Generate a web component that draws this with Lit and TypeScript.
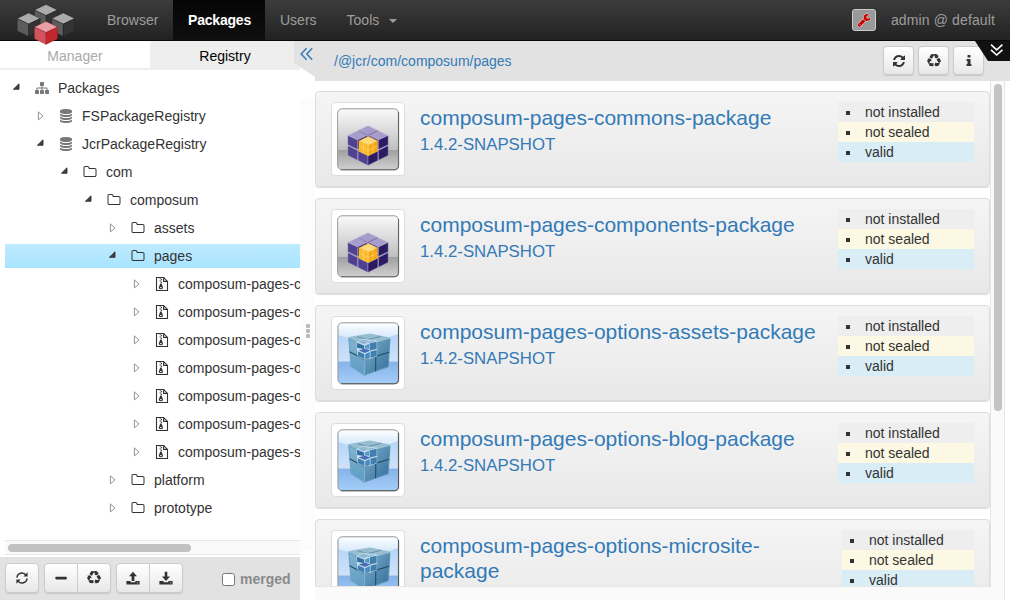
import { LitElement, html, css, svg } from "lit";
import { customElement } from "lit/decorators.js";
import { classMap } from "lit/directives/class-map.js";

const P = {
  refresh: "M1639 1056q0 5-1 7-64 268-268 434.5t-478 166.5q-146 0-282.5-55t-243.5-157l-129 129q-19 19-45 19t-45-19-19-45v-448q0-26 19-45t45-19h448q26 0 45 19t19 45-19 45l-137 137q71 66 161 102t187 36q134 0 250-65t186-179q11-17 53-117 8-23 30-23h192q13 0 22.5 9.5t9.5 22.5zm25-800v448q0 26-19 45t-45 19h-448q-26 0-45-19t-19-45 19-45l138-138q-148-137-349-137-134 0-250 65t-186 179q-11 17-53 117-8 23-30 23h-199q-13 0-22.5-9.5t-9.5-22.5v-7q65-268 270-434.5t480-166.5q146 0 284 55.5t245 156.5l130-129q19-19 45-19t45 19 19 45z",
  recycle: "M836 1169l-15 368-2 22-420-29q-36-3-67-31.5t-47-65.5q-11-27-14.5-55t4-65 12-55 21.5-64 19-53q78 12 509 28zm-387-586l180 379-147-92q-63 72-111.5 144.5t-72.5 125-39.5 94.5-18.5 63l-4 21-190-357q-17-26-18-56t6-47l8-18q35-63 114-188l-140-86zm1231 517l-188 359q-12 29-36.5 46.5t-43.5 20.5l-18 4q-71 7-219 12l8 164-230-367 211-362 7 173q170 16 283 5t170-33zm-785-924q-47 63-265 435l-317-187-19-12 225-356q20-31 60-45t80-10q24 2 48.5 12t42 21 41.5 33 36 34.5 36 39.5 32 35zm655 307l212 363q18 37 12.5 76t-27.5 74q-13 20-33 37t-38 28-48.5 22-47 16-51.5 14-46 12q-34-72-265-436l313-195zm-143-226l142-83-220 373-419-20 151-86q-34-89-75-166t-75.5-123.5-64.5-80-47-46.5l-17-13 405 1q31-3 58 10.5t39 28.5l11 15q39 61 112 190z",
  info: "M1216 1344v128q0 26-19 45t-45 19h-512q-26 0-45-19t-19-45v-128q0-26 19-45t45-19h64v-384h-64q-26 0-45-19t-19-45v-128q0-26 19-45t45-19h384q26 0 45 19t19 45v576h64q26 0 45 19t19 45zm-128-1152v192q0 26-19 45t-45 19h-256q-26 0-45-19t-19-45v-192q0-26 19-45t45-19h256q26 0 45 19t19 45z",
  sitemap: "M1792 1248v320q0 40-28 68t-68 28h-320q-40 0-68-28t-28-68v-320q0-40 28-68t68-28h96v-192h-512v192h96q40 0 68 28t28 68v320q0 40-28 68t-68 28h-320q-40 0-68-28t-28-68v-320q0-40 28-68t68-28h96v-192h-512v192h96q40 0 68 28t28 68v320q0 40-28 68t-68 28h-320q-40 0-68-28t-28-68v-320q0-40 28-68t68-28h96v-192q0-52 38-90t90-38h512v-192h-96q-40 0-68-28t-28-68v-320q0-40 28-68t68-28h320q40 0 68 28t28 68v320q0 40-28 68t-68 28h-96v192h512q52 0 90 38t38 90v192h96q40 0 68 28t28 68z",
  database: "M896 768q237 0 443-43t325-127v170q0 69-103 128t-280 93.5-385 34.5-385-34.5-280-93.5-103-128v-170q119 84 325 127t443 43zm0 768q237 0 443-43t325-127v170q0 69-103 128t-280 93.5-385 34.5-385-34.5-280-93.5-103-128v-170q119 84 325 127t443 43zm0-384q237 0 443-43t325-127v170q0 69-103 128t-280 93.5-385 34.5-385-34.5-280-93.5-103-128v-170q119 84 325 127t443 43zm0-1152q208 0 385 34.5t280 93.5 103 128v128q0 69-103 128t-280 93.5-385 34.5-385-34.5-280-93.5-103-128v-128q0-69 103-128t280-93.5 385-34.5z",
  folder: "M1600 1312v-704q0-40-28-68t-68-28h-704q-40 0-68-28t-28-68v-64q0-40-28-68t-68-28h-320q-40 0-68 28t-28 68v960q0 40 28 68t68 28h1216q40 0 68-28t28-68zm128-704v704q0 92-66 158t-158 66h-1216q-92 0-158-66t-66-158v-960q0-92 66-158t158-66h320q92 0 158 66t66 158v32h672q92 0 158 66t66 158z",
  wrench: "M448 1472q0-26-19-45t-45-19-45 19-19 45 19 45 45 19 45-19 19-45zm644-420l-682 682q-37 37-90 37-52 0-91-37l-106-108q-38-36-38-90 0-53 38-91l681-681q39 98 114.5 173.5t173.5 114.5zm634-435q0 39-23 106-47 134-164.5 217.5t-258.5 83.5q-185 0-316.5-131.5t-131.5-316.5 131.5-316.5 316.5-131.5q58 0 121.5 16.5t107.5 46.5q16 11 16 28t-16 28l-293 169v224l193 107q5-3 79-48.5t135.5-81 70.5-35.5q15 0 23.5 10t8.5 25z",
};

const fa = (name: keyof typeof P, size = 14) =>
  html`<svg width=${size} height=${size} viewBox="0 0 1792 1792" fill="currentColor"><path d=${P[name]}></path></svg>`;

const zipIcon = html`<svg width="14" height="16" viewBox="0 0 14 16" fill="none" stroke="currentColor" stroke-width="1.1">
  <path d="M1.5 1.5H8.6L12.5 5.4V14.5H1.5Z"></path><path d="M8.6 1.6V5.4H12.4"></path>
  <path d="M4.6 2.2h1.2M5.8 3.6h1.2M4.6 5h1.2M5.8 6.4h1.2" stroke-width="1.2"></path>
  <path d="M5.2 7.4h1.4L8 11.4a2.1 1.9 0 0 1-4.2 0Z" fill="currentColor" stroke="none"></path>
  <path d="M5 11.6h1.8" stroke="#fff" stroke-width=".9"></path></svg>`;

const syncThin = html`<svg width="14" height="14" viewBox="0 0 14 14" fill="none" stroke="currentColor" stroke-width="1.4">
  <path d="M1.9 6.6A5 5 0 0 1 11 4.2"></path><path d="M12.1 7.4A5 5 0 0 1 3 9.8"></path>
  <path d="M12.6 1.2V5.4H8.4ZM1.4 12.8V8.6H5.6Z" fill="currentColor" stroke="none"></path></svg>`;

const minusIcon = html`<svg width="14" height="14" viewBox="0 0 14 14" fill="currentColor"><rect x="1.4" y="5.8" width="11.4" height="2.8" rx=".8"></rect></svg>`;

const tray = svg`<path fill-rule="evenodd" d="M.4 10H4.6V11.2H9.4V10H13.6V13.4H.4ZM10.9 11.4v.9h1.2v-.9Z"></path>`;
const uploadIcon = html`<svg width="14" height="14" viewBox="0 0 14 14" fill="currentColor">${tray}<path d="M7 .8L11 5.3H8.4V10H5.6V5.3H3Z"></path></svg>`;
const downloadIcon = html`<svg width="14" height="14" viewBox="0 0 14 14" fill="currentColor">${tray}<path d="M7 10L3 5.6H5.7V.8H8.3V5.6H11Z"></path></svg>`;

/* Isometric cube: x/y is the top vertex, w the half width, q the quarter height, h the side height. */
const cube = (x: number, y: number, w: number, q: number, h: number, c: string[], edge = "none", sw = 0) => svg`
  <g stroke=${edge} stroke-width=${sw} stroke-linejoin="round">
    <path fill=${c[0]} d="M${x} ${y}l${w} ${q}l${-w} ${q}l${-w} ${-q}z"></path>
    <path fill=${c[1]} d="M${x - w} ${y + q}l${w} ${q}v${h}l${-w} ${-q}z"></path>
    <path fill=${c[2]} d="M${x + w} ${y + q}l${-w} ${q}v${h}l${w} ${-q}z"></path>
  </g>`;

const GREY = ["#ababab", "#5c5c5c", "#333"];
const logo = html`<svg width="60" height="44" viewBox="0 0 60 44">
  ${cube(30, 2.4, 11.5, 5.6, 12.4, GREY, "#1b1b1b", 0.4)}
  ${cube(12.7, 10.9, 11.5, 5.6, 12.4, GREY, "#1b1b1b", 0.4)}
  ${cube(47.3, 10.9, 11.5, 5.6, 12.4, GREY, "#1b1b1b", 0.4)}
  ${cube(30, 19.4, 11.5, 5.6, 11.8, ["#e8a0a6", "#cf545d", "#c1272d"], "#8a2026", 0.3)}
</svg>`;

const VIOLET = ["#a79dcb", "#4f4190", "#2c1b62"];
const GOLD = ["#ffd873", "#fdb827", "#f7a70f"];
const violetIcon = html`<svg class="pic" width="64" height="64" viewBox="0 0 64 64">
  <defs><linearGradient id="g" x1="0" y1="0" x2="0" y2="1">
    <stop offset="0" stop-color="#fafafa"></stop><stop offset=".67" stop-color="#bfbfbf"></stop>
    <stop offset=".68" stop-color="#a0a0a0"></stop><stop offset="1" stop-color="#d0d0d0"></stop></linearGradient></defs>
  <rect x="1.6" y="1.8" width="61" height="61" rx="4.5" fill="url(#g)" stroke="#999" stroke-width="1"></rect>
  <path d="M62.5 5V58.7a4 4 0 0 1-4 4H5" fill="none" stroke="#666" stroke-width="1.1"></path>
  ${cube(21.6, 33.8, 9.8, 4.8, 9.8, VIOLET, "#c4bddc", 0.4)}
  ${cube(42.4, 33.8, 9.8, 4.8, 9.8, VIOLET, "#c4bddc", 0.4)}
  ${cube(32, 39, 9.8, 4.8, 9.8, VIOLET, "#c4bddc", 0.4)}
  ${cube(32, 18.8, 9.6, 4.5, 9.6, VIOLET, "#c4bddc", 0.4)}
  ${cube(21.6, 23.8, 9.8, 4.6, 9.4, VIOLET, "#c4bddc", 0.4)}
  ${cube(42.4, 23.8, 9.8, 4.6, 9.4, VIOLET, "#c4bddc", 0.4)}
  ${cube(32.2, 29.4, 9.3, 4.6, 10.2, GOLD, "#ffc84a", 0.4)}
  <path d="M27.5 31.7l9.4 4.6M36.9 31.7l-9.4 4.6v10M36.9 36.3v10M22.9 39l9.3 4.6l9.3-4.6M32.2 38.6v10" fill="none" stroke="#ffe49a" stroke-width=".6" opacity=".8"></path>
</svg>`;

const blueIcon = html`<svg class="pic" width="64" height="64" viewBox="0 0 64 64">
  <defs>
    <linearGradient id="b" x1="0" y1="0" x2="0" y2="1"><stop offset="0" stop-color="#a9cff8"></stop><stop offset=".63" stop-color="#cfe2f8"></stop><stop offset=".64" stop-color="#86b3ea"></stop><stop offset="1" stop-color="#a4cdf8"></stop></linearGradient>
    <linearGradient id="s" x1="0" y1="0" x2="0" y2="1"><stop offset="0" stop-color="#fff"></stop><stop offset="1" stop-color="#dfeefd" stop-opacity=".7"></stop></linearGradient>
    <linearGradient id="l" x1="0" y1="0" x2="0" y2="1"><stop offset="0" stop-color="#86b3cf"></stop><stop offset="1" stop-color="#5b9bc4"></stop></linearGradient>
    <linearGradient id="r" x1="0" y1="0" x2="1" y2="1"><stop offset="0" stop-color="#7fb0cd"></stop><stop offset="1" stop-color="#2f6b98"></stop></linearGradient>
  </defs>
  <rect x="1.9" y="1.8" width="60.7" height="61" rx="4.5" fill="url(#b)"></rect>
  <path d="M2.4 6a4 4 0 0 1 4-4H58a4 4 0 0 1 4 4V13Q32 25 2.4 14Z" fill="url(#s)"></path>
  <rect x="1.9" y="1.8" width="60.7" height="61" rx="4.5" fill="none" stroke="#999" stroke-width="1"></rect>
  <path d="M62.5 5V58.7a4 4 0 0 1-4 4H5" fill="none" stroke="#555" stroke-width="1.1"></path>
  <g stroke-linejoin="round">
    <path d="M13 17L34 13.4L53.5 17.4L28.3 25Z" fill="#98bdd0" stroke="#98bdd0" stroke-width="2"></path>
    <path d="M13 18L28.3 25.5V54L15.2 45.5Z" fill="url(#l)" stroke="#6fa5c5" stroke-width="1.4"></path>
    <path d="M28.3 25.5L53.8 18.4L52.2 45.6L28.3 54Z" fill="url(#r)" stroke="#5b93b5" stroke-width="1.2"></path>
    <path d="M13.6 30.8L28.3 38.6L53.2 31.2M40 21.6L39.6 50.2" fill="none" stroke="#1f4f60" stroke-width="1.1"></path>
    <path d="M28.3 39V54" fill="none" stroke="#8fc0dc" stroke-width=".8"></path>
    <path d="M21.5 15.8L41 21M23 20.6L45 15.4" fill="none" stroke="#55899f" stroke-width=".8"></path>
  </g>
  <path d="M20.4 21L27 17.8L41.2 19.8V35.2L34.5 37.8L28.8 38.8L21.6 35.4Z" fill="#cfe3f0"></path>
  <g fill="#3f80b1">
    <path d="M20.9 21.8L28 24.4V28L21.3 27Z" fill="#326fa2"></path>
    <path d="M33.7 22.2L40.7 20.8V28L33.7 29.4Z"></path>
    <path d="M28.8 24.4L33.2 22.8V28L28.8 27.2Z" fill="#5a97c2"></path>
    <path d="M21.6 20.9L26.6 18.6L33 19.8L28.2 23.4Z" fill="#8fb9d3"></path>
    <path d="M29.6 22.7L34 19.6L40.2 20.2L33.6 21.8Z" fill="#8fb9d3"></path>
    <path d="M22.6 29.4L28.6 27.6L34.6 29.4L29 32Z" fill="#4a6dba"></path>
    <path d="M21.8 30.2L28.4 33V38L22 35.2Z"></path>
    <path d="M29.2 33L33.8 31V37.2L29.2 38.2Z" fill="#4a8bbd"></path>
    <path d="M34.5 30.4L40.8 28.9V35L34.5 37Z"></path>
  </g>
</svg>`;

type Node = { level: number; open: boolean; icon: string; text: string; on?: boolean };
const NODES: Node[] = [
  { level: 0, open: true, icon: "sitemap", text: "Packages" },
  { level: 1, open: false, icon: "database", text: "FSPackageRegistry" },
  { level: 1, open: true, icon: "database", text: "JcrPackageRegistry" },
  { level: 2, open: true, icon: "folder", text: "com" },
  { level: 3, open: true, icon: "folder", text: "composum" },
  { level: 4, open: false, icon: "folder", text: "assets" },
  { level: 4, open: true, icon: "folder", text: "pages", on: true },
  ...["commons", "components", "options-assets", "options-blog", "options-microsite", "options-prototype", "stage"].map((n) => ({
    level: 5, open: false, icon: "zip", text: `composum-pages-${n}-package`,
  })),
  { level: 4, open: false, icon: "folder", text: "platform" },
  { level: 4, open: false, icon: "folder", text: "prototype" },
];

@customElement("package-tree")
class PackageTree extends LitElement {
  static styles = css`
    :host { display: flex; flex-direction: column; gap: 4px; padding: 6px 0 0 5px; overflow: hidden; flex: 1; min-height: 0; box-sizing: border-box; }
    .row { display: flex; align-items: center; height: 24px; flex: none; white-space: nowrap; box-sizing: border-box; }
    .on { background: linear-gradient(#beebff, #a8e4ff); }
    .arrow { width: 8px; height: 10px; flex: none; margin-left: 7px; }
    .ico { width: 16px; height: 16px; margin-left: 14px; flex: none; display: flex; align-items: center; justify-content: center; color: #333; }
    .grey { color: #777; }
    .label { margin-left: 8px; }
  `;
  render() {
    return NODES.map((n) => html`
      <div class=${classMap({ row: true, on: !!n.on })} style="padding-left:${n.level * 24}px">
        <svg class="arrow" viewBox="0 0 8 10">${n.open
          ? svg`<path d="M7 .8V6.3H1.4Z" fill="#444" stroke="#222" stroke-width=".8"></path>`
          : svg`<path d="M2.4 .9V8.9L7 4.9Z" fill="#fff" stroke="#888" stroke-width=".9"></path>`}</svg>
        <span class=${classMap({ ico: true, grey: n.level < 2 })}>${n.icon === "zip" ? zipIcon : fa(n.icon as keyof typeof P)}</span>
        <span class="label">${n.text}</span>
      </div>`);
  }
}

@customElement("package-card")
class PackageCard extends LitElement {
  static properties = { name: {}, kind: {}, narrow: { type: Boolean } };
  declare name: string;
  declare kind: string;
  declare narrow: boolean;
  static styles = css`
    :host { display: flex; align-items: flex-start; box-sizing: border-box; min-height: 96px; flex: none; padding: 10px 15px; border: 1px solid #dcdcdc; border-radius: 4px; background: linear-gradient(#f5f5f5, #e8e8e8); box-shadow: 0 1px 1px rgba(0, 0, 0, .14); }
    .thumb { flex: none; padding: 4px; border: 1px solid #ddd; border-radius: 4px; background: #fff; }
    .pic { display: block; }
    .text { flex: 1; min-width: 0; margin: 3px 15px 0; color: #337ab7; }
    .title { font-size: 21px; line-height: 25px; }
    .version { font-size: 16.8px; line-height: 20px; margin-top: 5px; }
    .states { flex: none; width: 136px; }
    .narrow { width: 132px; }
    .state { display: flex; align-items: center; height: 20px; padding-left: 8px; gap: 15px; }
    .state::before { content: ""; width: 4px; height: 4px; background: #333; margin-top: 2px; }
    .a { background: #eee; }
    .b { background: #fcf8e3; }
    .c { background: #d9edf7; }
  `;
  render() {
    return html`
      <div class="thumb">${this.kind === "violet" ? violetIcon : blueIcon}</div>
      <div class="text"><div class="title">${this.name}</div><div class="version">1.4.2-SNAPSHOT</div></div>
      <div class=${classMap({ states: true, narrow: this.narrow })}>
        <div class="state a">not installed</div><div class="state b">not sealed</div><div class="state c">valid</div>
      </div>`;
  }
}

@customElement("app-root")
class AppRoot extends LitElement {
  static styles = css`
    :host { display: flex; flex-direction: column; width: 1010px; height: 600px; overflow: hidden; background: #fff; color: #333; font: 14px/20px "Liberation Sans", Arial, sans-serif; position: relative; }
    svg { display: block; }
    .nav { display: flex; align-items: stretch; height: 41px; flex: none; box-sizing: border-box; border-bottom: 1px solid #080808; background: linear-gradient(#3c3c3c, #222); color: #9d9d9d; padding-left: 92px; }
    .brand { position: absolute; left: 16px; top: 2px; }
    .item { padding: 10px 15px; }
    .first { width: 81px; box-sizing: border-box; padding-right: 0; }
    .active { background: linear-gradient(#050505, #0f0f0f); color: #fff; font-weight: bold; width: 92px; padding-right: 0; box-sizing: border-box; letter-spacing: -.2px; }
    .tools { display: flex; align-items: center; gap: 10px; }
    .caret { border: 4px solid transparent; border-top-color: #9d9d9d; border-bottom: 0; margin-top: 2px; }
    .spacer { flex: 1; }
    .wrench { align-self: center; width: 24px; height: 22px; box-sizing: border-box; border: 1px solid #ccc; border-radius: 3px; background: #999; display: flex; align-items: center; justify-content: center; color: #c00; }
    .wrench path { stroke: #ddd; stroke-width: 130; paint-order: stroke; }
    .user { padding: 10px 15px 10px; letter-spacing: .13px; }
    .main { display: flex; flex: 1; min-height: 0; }
    .left { width: 300px; display: flex; flex-direction: column; flex: none; }
    .tabs { display: flex; height: 29px; flex: none; text-align: center; line-height: 30px; }
    .tab { width: 150px; box-sizing: border-box; color: #aaa; border-bottom: 2px solid #eee; }
    .sel { background: #eee; color: #000; }
    .hbar { height: 15px; box-sizing: border-box; margin: 0 0 2px 5px; border: solid #e8e8e8; border-width: 1px 0; background: #fafafa; padding: 3px; flex: none; }
    .hthumb { width: 183px; height: 8px; border-radius: 4px; background: #c1c1c1; }
    .actions { height: 43px; flex: none; box-sizing: border-box; background: #e2e2e2; display: flex; align-items: center; padding: 0 0 1px 5px; gap: 5px; }
    .group { display: flex; border: 1px solid #ccc; border-radius: 4px; background: linear-gradient(#fff, #e8e8e8); box-shadow: 0 1px 1px rgba(0, 0, 0, .12); }
    .btn { height: 28px; width: 32px; display: flex; align-items: center; justify-content: center; }
    .btn + .btn { border-left: 1px solid #ccc; }
    .check { width: 13px; height: 13px; box-sizing: border-box; border: 1px solid #767676; border-radius: 2.5px; background: #fff; margin: 2px 0 0 34px; }
    .merged { font-weight: bold; color: #8a8a8a; margin-top: 2px; }
    .split { width: 15px; flex: none; display: flex; flex-direction: column; background: linear-gradient(#fff 58px, #fcfcfc 58px 509px, #fff 509px); align-items: center; justify-content: center; gap: 1px; box-sizing: border-box; padding-top: 21px; }
    .dot { width: 4px; height: 4px; background: #bbb; border-radius: 1px; }
    .right { flex: 1; display: flex; flex-direction: column; min-width: 0; }
    .bar { height: 40px; background: #e2e2e2; flex: none; display: flex; align-items: center; gap: 4px; padding: 0 26px 1px 19px; box-sizing: border-box; }
    .path { flex: 1; color: #337ab7; padding-top: 1px; }
    .bar .btn { width: 29px; height: 27px; }
    .body { flex: 1; min-height: 0; display: flex; margin-right: 5px; border-right: 1px solid #e8e8e8; background: #fafafa; }
    .cards { width: 676px; height: 506px; box-sizing: border-box; border: solid #e6e6e6; border-width: 0 1px 1px 0; overflow: hidden; display: flex; flex-direction: column; gap: 11px; padding-top: 10px; background: #fff; }
    .vbar { flex: 1; padding: 3px 0 0 3px; }
    .vthumb { width: 8px; height: 327px; border-radius: 4px; background: #c4c4c4; }
    .flap { position: absolute; left: 294px; top: 41px; }
    .corner { position: absolute; right: 0; top: 41px; }
  `;
  render() {
    return html`
      <div class="nav">
        <div class="item first">Browser</div><div class="item active">Packages</div><div class="item">Users</div>
        <div class="item tools">Tools<span class="caret"></span></div>
        <div class="spacer"></div>
        <div class="wrench">${fa("wrench", 14)}</div><div class="user">admin @ default</div>
      </div>
      <div class="main">
        <div class="left">
          <div class="tabs"><div class="tab">Manager</div><div class="tab sel">Registry</div></div>
          <package-tree></package-tree>
          <div class="hbar"><div class="hthumb"></div></div>
          <div class="actions">
            <div class="group"><div class="btn">${syncThin}</div></div>
            <div class="group"><div class="btn">${minusIcon}</div><div class="btn">${fa("recycle")}</div></div>
            <div class="group"><div class="btn">${uploadIcon}</div><div class="btn">${downloadIcon}</div></div>
            <span class="check"></span><span class="merged">merged</span>
          </div>
        </div>
        <div class="split"><i class="dot"></i><i class="dot"></i><i class="dot"></i></div>
        <div class="right">
          <div class="bar">
            <div class="path">/@jcr/com/composum/pages</div>
            <div class="group"><div class="btn">${fa("refresh")}</div></div>
            <div class="group"><div class="btn">${fa("recycle")}</div></div>
            <div class="group"><div class="btn">${fa("info")}</div></div>
          </div>
          <div class="body">
            <div class="cards">
              <package-card name="composum-pages-commons-package" kind="violet"></package-card>
              <package-card name="composum-pages-components-package" kind="violet"></package-card>
              <package-card name="composum-pages-options-assets-package" kind="blue"></package-card>
              <package-card name="composum-pages-options-blog-package" kind="blue"></package-card>
              <package-card name="composum-pages-options-microsite-package" kind="blue" narrow></package-card>
            </div>
            <div class="vbar"><div class="vthumb"></div></div>
          </div>
        </div>
      </div>
      <svg class="flap" width="21" height="40" viewBox="0 0 21 40"><path d="M0 0H21V36L0 22Z" fill="#e2e2e2"></path>
        <path d="M12.6 7.2L7.2 13L12.6 18.8M18.2 7.2L12.8 13L18.2 18.8" fill="none" stroke="#337ab7" stroke-width="1.5"></path></svg>
      <svg class="corner" width="35" height="20" viewBox="0 0 35 20"><path d="M0 0H35V20H13Z" fill="#111"></path>
        <path d="M16 3.6L21.7 8.8L27.4 3.6M16 8.8L21.7 14L27.4 8.8" fill="none" stroke="#fff" stroke-width="1.6"></path></svg>
      <div class="brand">${logo}</div>`;
  }
}
